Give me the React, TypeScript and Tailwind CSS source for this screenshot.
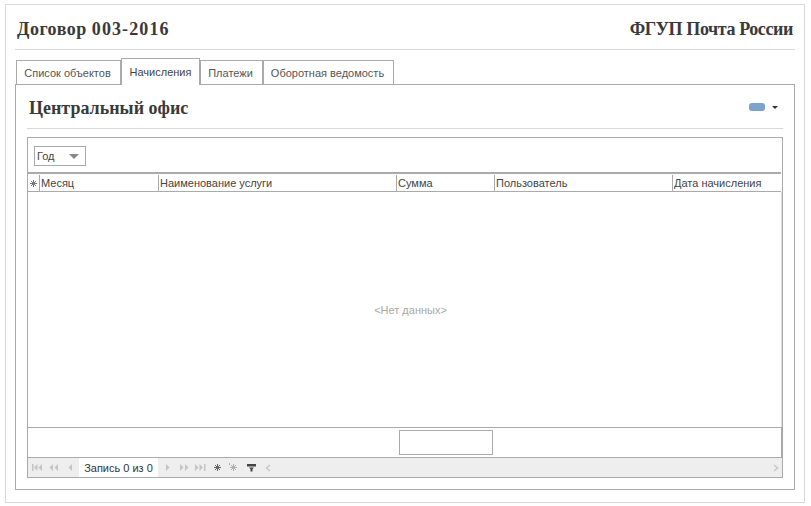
const uiFont = "font-['Liberation_Sans',sans-serif]";
const titleFont = "font-['Liberation_Serif',serif]";

const columns = [
  { title: 'Месяц', width: 'w-[119px]' },
  { title: 'Наименование услуги', width: 'w-[238px]' },
  { title: 'Сумма', width: 'w-[98px]' },
  { title: 'Пользователь', width: 'w-[178px]' },
  { title: 'Дата начисления', width: 'flex-1' },
];

function Tab({ label, active, width }: { label: string; active?: boolean; width: string }) {
  if (active) {
    return (
      <div className={`${width} h-[27px] -mb-px z-10 flex items-center justify-center border border-b-0 border-[#aaaaaa] bg-white text-[#444]`}>
        {label}
      </div>
    );
  }
  return (
    <div className={`${width} h-[24px] pt-[2px] pr-[2px] flex items-center justify-center border border-b-0 border-[#aaaaaa] bg-white text-[#555]`}>
      {label}
    </div>
  );
}

function NavIcon({ d, color = '#c4c4c4', className }: { d: string; color?: string; className: string }) {
  return (
    <svg viewBox="0 0 11 9" width="11" height="9" className={className} fill={color}>
      <path d={d} />
    </svg>
  );
}

function Star({ color, className, tick }: { color: string; className: string; tick?: boolean }) {
  return (
    <svg viewBox="0 0 9 9" width="9" height="9" className={className} fill="none" stroke={color} strokeWidth="1">
      <path d="M4.5 1v7M1 4.5h7M2 2l5 5M7 2l-5 5" />
      {tick && <path d="M0.5 0v2" />}
    </svg>
  );
}

export default function App() {
  return (
    <div className={`w-[811px] h-[506px] bg-white pt-1 px-[5px] ${uiFont} text-[11px]`}>
      <div className="w-[800px] h-[499px] border border-[#d9d9d9] px-[9px]">
        {/* Шапка */}
        <div className={`h-[45px] mx-0 flex items-end justify-between border-b border-[#d9d9d9] pb-[10px] px-[2px] ${titleFont} font-bold text-[18px] leading-5 text-[#3a3a3a]`}>
          <span className="tracking-[0.5px]">
            Договор <span className="tracking-[1.1px]">003-2016</span>
          </span>
          <span className="tracking-[-0.4px]">ФГУП Почта России</span>
        </div>

        {/* Вкладки */}
        <div className="mt-2 h-[26px] flex items-end pl-px">
          <Tab label="Список объектов" width="w-[105px]" />
          <Tab label="Начисления" active width="w-[79px]" />
          <Tab label="Платежи" width="w-[63px]" />
          <Tab label="Оборотная ведомость" width="w-[131px]" />
        </div>

        <div className="w-[780px] h-[406px] border border-[#aaaaaa] px-[11px]">
          <div className={`h-[44px] flex items-center justify-between border-b border-[#d9d9d9] pt-[4px] pl-[2px] ${titleFont} font-bold text-[18px] text-[#3a3a3a]`}>
            <span>Центральный офис</span>
            <div className="flex items-center gap-[7px] pr-[5px] pb-[3px]">
              <div className="w-4 h-2 rounded-[3px] bg-[#7ba3cc]" />
              <div className="w-0 h-0 border-x-[3px] border-t-[3px] border-x-transparent border-t-[#333]" />
            </div>
          </div>

          {/* Таблица */}
          <div className="mt-2 w-[756px] h-[341px] border border-[#aaaaaa] flex flex-col">
            <div className="h-[34px] pt-2 pl-[6px] shrink-0">
              <div className="w-[52px] h-[20px] border border-[#aaaaaa] flex items-center justify-between pl-[2px] pr-[6px] text-[#444]">
                <span>Год</span>
                <div className="w-0 h-0 border-x-[5px] border-t-[5px] border-x-transparent border-t-[#888]" />
              </div>
            </div>

            <div className="h-[20px] pt-px shrink-0 flex border-t-2 border-b border-[#aaaaaa] text-[#444] mr-[1px]">
              <div className="w-[12px] flex items-center justify-center border-r border-[#aaaaaa]">
                <Star color="#777" className="w-[9px] h-[9px]" />
              </div>
              {columns.map((col, i) => (
                <div
                  key={col.title}
                  className={`${col.width} flex items-center pl-px ${i < columns.length - 1 ? 'border-r border-[#aaaaaa]' : ''}`}
                >
                  {col.title}
                </div>
              ))}
            </div>

            <div className="h-[235px] shrink-0 flex items-center justify-center pl-[12px] pt-[2px] text-[#aaa9a0] border-r border-[#dddddd]">
              &lt;Нет данных&gt;
            </div>

            <div className="h-[31px] shrink-0 border-t border-b border-r border-[#aaaaaa] pl-[371px] pt-[2px]">
              <div className="w-[94px] h-[25px] border border-[#aaaaaa]" />
            </div>

            <div className="flex-1 bg-[#eeeeee] flex items-center text-[#333]">
              <div className="w-[51px] flex items-center pl-[4px]">
                <NavIcon className="mr-[5px]" d="M0 1h1.5v7H0zM5.5 1v7L2 4.5zM10 1v7L6.5 4.5z" />
                <NavIcon className="mr-[5px]" d="M5 1v7L1.5 4.5zM10 1v7L6.5 4.5z" />
                <NavIcon className="" d="M8 1v7L4.5 4.5z" />
              </div>
              <div className="w-[79px] h-full bg-white flex items-center justify-center pt-[2px]">Запись 0 из 0</div>
              <div className="flex items-center pl-[5px]">
                <NavIcon className="mr-[5px]" d="M3 1v7l3.5-3.5z" />
                <NavIcon className="mr-[5px]" d="M1 1v7l3.5-3.5zM6 1v7l3.5-3.5z" />
                <NavIcon className="mr-[7px]" d="M0 1v7l3.5-3.5zM4.5 1v7L8 4.5zM9 1h1.5v7H9z" />
                <Star color="#666" className="mr-[7px]" />
                <Star color="#b0b0b0" className="mr-[9px]" tick />
                <svg viewBox="0 0 9 9" width="9" height="9" fill="#444" className="mr-[9px]">
                  <path d="M0 1h9v2.500H0zM2 4.500h5L5.500 6v2.500h-2V6z" />
                </svg>
                <svg viewBox="0 0 6 8" width="6" height="8" fill="none" stroke="#c8c8c8" strokeWidth="1.5">
                  <path d="M5 1L1.5 4 5 7" />
                </svg>
              </div>
              <div className="flex-1" />
              <svg viewBox="0 0 6 8" width="6" height="8" fill="none" stroke="#c8c8c8" strokeWidth="1.5" className="mr-[3px]">
                <path d="M1 1l3.5 3L1 7" />
              </svg>
            </div>
          </div>
        </div>
      </div>
    </div>
  );
}
